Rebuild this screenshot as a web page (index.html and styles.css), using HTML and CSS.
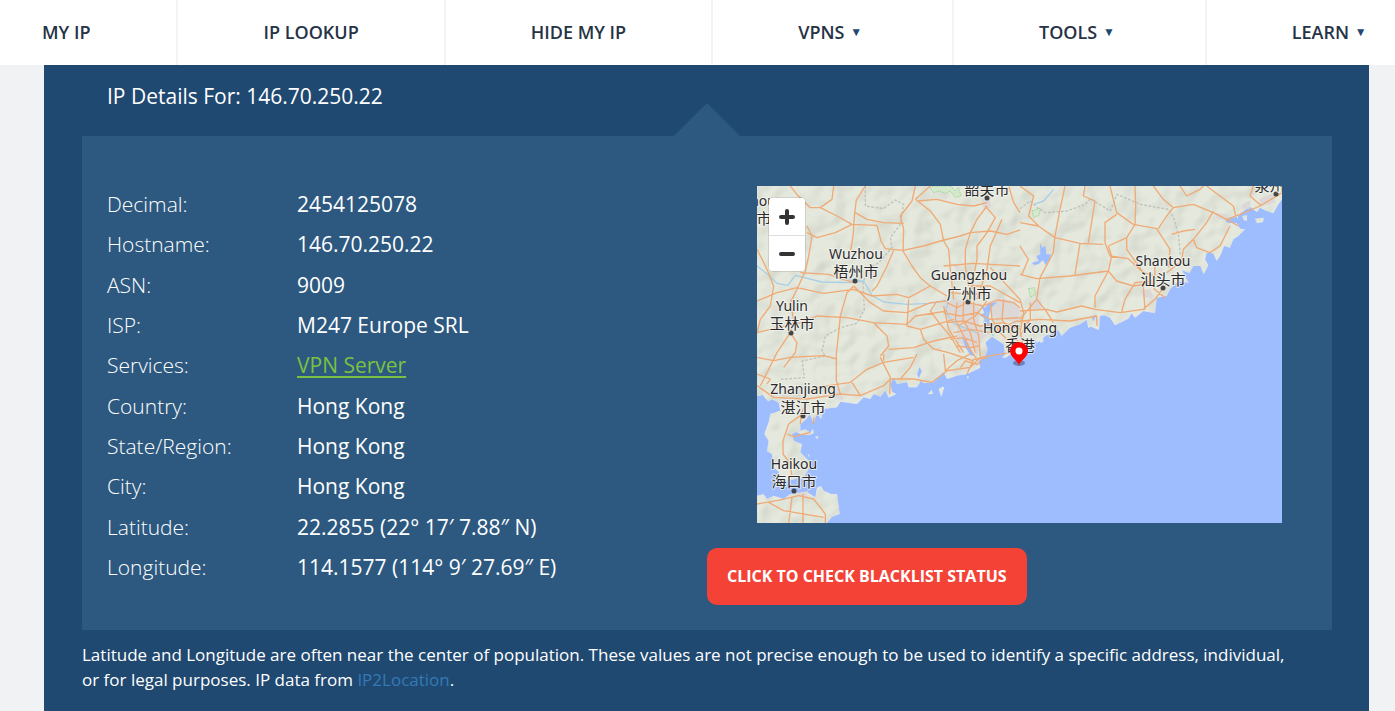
FILE: index.html
```html
<!DOCTYPE html>
<html lang="en">
<head>
<meta charset="utf-8">
<title>IP Details</title>
<link rel="stylesheet" href="styles.css">
</head>
<body>
<nav class="nav" aria-label="Main">
  <a class="nav-item" href="#">MY IP</a>
  <a class="nav-item" href="#">IP LOOKUP</a>
  <a class="nav-item" href="#">HIDE MY IP</a>
  <a class="nav-item" href="#">VPNS <span class="caret">▼</span></a>
  <a class="nav-item" href="#">TOOLS <span class="caret">▼</span></a>
  <a class="nav-item" href="#">LEARN <span class="caret">▼</span></a>
</nav>
<main class="details">
  <h1 class="title">IP Details For: 146.70.250.22</h1>
  <section class="panel">
    <dl class="facts">
      <dt>Decimal:</dt><dd>2454125078</dd>
      <dt>Hostname:</dt><dd>146.70.250.22</dd>
      <dt>ASN:</dt><dd>9009</dd>
      <dt>ISP:</dt><dd>M247 Europe SRL</dd>
      <dt>Services:</dt><dd><a class="service" href="#">VPN Server</a></dd>
      <dt>Country:</dt><dd>Hong Kong</dd>
      <dt>State/Region:</dt><dd>Hong Kong</dd>
      <dt>City:</dt><dd>Hong Kong</dd>
      <dt>Latitude:</dt><dd>22.2855 (22° 17′ 7.88″ N)</dd>
      <dt>Longitude:</dt><dd>114.1577 (114° 9′ 27.69″ E)</dd>
    </dl>
    <div class="side">
      <div class="map">
        <svg class="map-canvas" viewBox="0 0 525 337" role="img" aria-label="Map of Hong Kong and the surrounding coast">
          <defs>
            <filter id="relief" x="0" y="0" width="100%" height="100%" color-interpolation-filters="sRGB">
              <feTurbulence type="fractalNoise" baseFrequency="0.016" numOctaves="2" seed="4" result="noise"/>
              <feDiffuseLighting in="noise" surfaceScale="3" diffuseConstant="1.12" lighting-color="#fff" result="light"><feDistantLight azimuth="225" elevation="62"/></feDiffuseLighting>
              <feBlend in="SourceGraphic" in2="light" mode="multiply" result="shaded"/>
              <feComposite in="shaded" in2="SourceGraphic" operator="in"/>
            </filter>
          </defs>
          <rect class="sea" width="525" height="337"/>
          <svg width="525" height="337" viewBox="0 0 1575 1011">
            <g class="land" filter="url(#relief)">
              <path d="M0 0H1575V40L1564 55 1549 82 1529 75 1509 65 1500 78 1479 62 1459 75 1444 88 1439 112 1449 128 1464 130 1444 150 1429 160 1419 185 1401 180 1392 205 1379 225 1369 202 1349 200 1344 220 1354 238 1340 265 1330 240 1309 240 1297 262 1275 252 1294 290 1264 285 1239 310 1229 330 1199 335 1194 382 1159 375 1134 395 1124 382 1114 398 1074 418 1059 395 1042 388 1029 390 1026 432 1002 422 994 425 989 402 969 415 939 425 914 450 904 432 889 440 864 450 854 462 840 470 830 455 818 480 789 488 750 512 744 505 740 475 705 452 685 470 692 490 684 512 665 525 670 545 630 564 600 569 570 579 560 559 530 589 500 592 485 578 495 555 487 543 480 565 490 588 480 604 455 604 450 589 420 594 410 574 400 594 405 618 418 624 395 635 385 614 370 632 350 624 340 639 320 634 300 654 250 647 240 664 200 669 192 700 180 680 170 710 158 685 148 699 130 714 130 732 105 744 110 764 135 774 130 799 155 824 155 849 140 874 90 884 60 874 66 858 50 844 45 804 30 796 35 764 22 744 35 709 40 684 70 674 65 650 45 640 30 649 12 630 0 629ZM0 929 20 925 30 939 50 929 80 939 100 924 150 919 175 934 180 905 192 900 200 914 222 924 240 924 248 984 225 992 210 1011H0Z"/>
              <path d="M118 738 145 730 160 740 168 728 170 742 155 748 130 744ZM174 752 184 750 182 760ZM512 625 524 612 528 624ZM545 610 556 602 562 604 553 632ZM630 570 636 572 632 578ZM152 802 158 810 156 814ZM845 458 862 462 852 472ZM1456 90 1470 88 1470 104 1460 102ZM1494 98 1520 95 1518 108 1500 112ZM735 514 750 502 763 500 745 516Z"/>
            </g>
            <g class="urban">
              <path d="M560 350 590 340 640 345 668 372 666 420 700 440 676 460 660 510 640 480 600 470 600 430 570 400ZM690 350 725 335 770 345 789 370 780 410 740 400 705 390ZM585 235 605 235 605 255ZM673 40 700 35 702 65 680 68ZM815 350 850 335 855 370 825 375ZM1374 80 1410 85 1414 105 1380 98ZM1455 55 1480 42 1478 68 1455 70ZM1505 40 1550 20 1555 50 1518 60ZM1148 312 1180 310 1190 335 1160 336ZM225 620 245 605 260 640 235 640ZM110 922 155 915 145 935ZM535 490 555 478 550 496ZM570 555 600 550 600 560Z"/>
            </g>
            <path class="water" d="M672 358 685 365 692 355 722 347 702 365 694 395 703 425 690 420 680 395 668 388 682 380ZM614 450 630 470 652 510 640 508 625 484ZM849 172 856 185 866 180 868 205 882 205 878 218 866 238 858 222 844 235 830 237 825 230 845 225 838 210 850 205ZM1404 100 1440 92 1444 112 1410 110ZM0 640 15 625 40 655 30 660ZM1003 395 1018 385 1010 405Z"/>
            <g class="river">
              <path d="M0 240 28 262 60 292 92 298 115 268 195 288 280 290 320 285 345 328 380 348 450 355 520 352 575 342M575 342 565 380 595 415 660 440M830 55 860 45 890 10M692 378 680 410 710 450M310 283 250 280"/>
            </g>
            <g class="border-line">
              <path d="M325 0V60L380 68 415 42 440 55 430 115 400 155 405 185 365 230 335 245 318 290 322 370 300 412 250 425 205 450 195 495 205 510 136 525 142 575 70 580M789 68 820 45 840 65 865 80 930 75 985 55 1000 38 1060 75 1080 25 1150 55 1235 70 1250 95 1265 150 1270 210"/>
            </g>
            <path class="park" d="M518 5 530 0 580 0 595 15 605 5 612 30 595 35 580 15 565 22 545 15 530 20ZM825 75 850 66 846 88 830 95ZM815 308 832 305 836 325 820 333Z"/>
            <g class="roads">
              <path d="M100 0 122 28 160 65 190 65 240 90 285 115 360 118M230 0 225 40 190 65M325 0 298 42 293 80 288 150 280 200M295 80 330 100 380 110 440 112M475 0 465 45 430 90 440 130 438 195 465 240 490 275 520 300 570 330M360 118 372 165 385 188 438 193 500 180 550 165 610 150 640 140M410 193 390 240 360 300 345 315M475 40 520 75 550 115 560 165 575 190 580 250 590 340M520 0 475 40M480 45 540 40 600 55 650 60 690 50M685 60 715 95 690 140 660 180 660 220 650 270 640 345M690 60 660 100 640 140 700 135 750 145 789 132M640 140 625 190 625 240 635 300M755 0 770 50 789 80M735 100 700 180 690 250 660 340M150 140 180 155 235 140 285 115M0 190 30 250 50 300 40 360 10 400 0 440M130 260 215 265 290 290M0 345 60 320 120 305 200 322 290 310 345 330 420 325 455 335 520 300M150 120 165 150 155 210 145 255 120 310 100 350 110 400 100 440 60 500 10 600M290 300 270 320 250 390 245 440 238 504 238 584 250 624M290 300 340 350 380 375 450 380 520 350 570 345M455 340 450 420 490 430 540 415 590 400M0 440 40 430 130 410 180 390 270 395 350 410 450 415 475 390 570 375M350 410 390 450 395 480 370 510M490 430 500 460 530 490M395 490 470 485 530 465 600 450M100 440 120 470 115 500 80 544M540 345 520 375 550 415 580 450 610 500M560 240 650 232 700 235 789 240M700 245 789 340M640 300 700 300 789 350"/>
              <path d="M924 0 909 70 894 150 889 200 849 275M984 0 979 30 1014 45 994 170M1059 0 1079 80 1129 115 1199 128 1239 190 1235 245M789 110 844 120 894 155 969 172 1039 175M1079 85 1044 110 1044 170 1059 210 1114 218 1159 260M1134 0 1136 60 1134 115 1109 155 1054 180M1109 155 1109 190 1159 260 1194 270M969 172 954 265M789 265 839 278 939 270 1054 255 1079 285 1129 300 1189 290M1054 180 1064 210 1054 255 1014 330 1014 365M789 375 869 370 899 378 974 360 1014 370 1089 380 1159 370 1194 340 1215 310M1094 378 1104 340 1134 290 1185 285M1159 300 1164 372M1189 0 1219 40 1249 65 1229 90 1204 128M1249 65 1309 55 1369 80 1409 100 1444 120M1369 75 1349 110 1309 160 1279 190 1274 225 1229 260M1269 0 1289 30 1329 10 1340 0M1244 145 1279 135 1314 130M1309 160 1319 185 1359 200 1389 180 1419 120M1409 100 1449 85 1509 60 1575 20M1349 0 1389 30 1429 60 1436 90M1489 0 1479 30 1514 60M789 180 814 220 795 265M849 275 839 340 864 370 889 410M839 340 789 400M789 405 849 400 939 405 1019 390 1020 420M789 0 830 30 815 90 845 120M1194 240 1192 310 1225 335"/>
              <path d="M0 514 50 524 100 514 200 509 240 519M0 564 40 579 30 594M0 599 50 634 150 639 250 624 310 629 380 599 400 579 470 579 525 589 570 554 640 544 670 514 760 500M180 604 280 589 330 550 380 529 470 514M370 514 400 574 398 624M380 524 380 504M480 504 460 544 430 579M560 504 565 554 600 524 640 504M285 589 310 629M150 644 130 689 95 714 78 764 78 804 100 834 105 874M90 744 110 752 160 739M170 694 170 714M0 954 60 944 125 929 170 939 205 984 205 1011M35 949 80 974 200 994M138 924V1011M105 934 95 1011M130 714 132 690"/>
              <path d="M570 350 600 365 630 350 680 360 720 342 770 350 789 365M560 380 610 390 660 380 700 400 789 395M570 410 620 405 670 420 740 410 789 430M590 440 640 430 700 440 789 420M600 350 595 400 620 450 640 490 660 520M620 340 618 400 640 440 655 500M650 345 650 400 665 450 670 510M700 350 705 400 730 440 770 480M740 340 735 400 765 450 789 470M580 460 620 455 660 470M600 480 640 485 665 480M530 489 575 500 650 525M630 564 650 520 690 516M789 340 800 380 789 440 800 480M820 350 820 400 789 450M560 360 575 430 620 500M610 545 625 525 660 535 675 525M603 420 655 390 690 345M720 430 780 405 820 410M580 320 635 325 690 322"/>
            </g>
          </svg>
          <g class="city-dots">
            <circle cx="98" cy="95" r="2.5"/><circle cx="34" cy="147" r="2.5"/><circle cx="211" cy="116" r="2.5"/><circle cx="230" cy="12" r="2.5"/><circle cx="406" cy="102" r="2.5"/><circle cx="519" cy="8" r="2.5"/><circle cx="46" cy="230" r="2.5"/><circle cx="37" cy="305" r="2.5"/>
          </g>
          <g class="labels">
            <text x="99" y="73">Wuzhou</text><text class="han" x="99" y="91">梧州市</text>
            <text x="212" y="94">Guangzhou</text><text class="han" x="212" y="113">广州市</text>
            <text x="35" y="125">Yulin</text><text class="han" x="35" y="143">玉林市</text>
            <text x="263" y="147">Hong Kong</text><text class="han" x="263" y="165">香港</text>
            <text x="406" y="80">Shantou</text><text class="han" x="406" y="99">汕头市</text>
            <text x="46" y="208">Zhanjiang</text><text class="han" x="46" y="227">湛江市</text>
            <text x="37" y="283">Haikou</text><text class="han" x="37" y="301">海口市</text>
            <text class="han" x="230" y="9">韶关市</text><text class="han" x="520" y="5">泉州市</text>
            <text x="-7" y="20">Liuzhou</text><text class="han" x="-8" y="38">柳州市</text>
          </g>
          <ellipse class="pin-shadow" cx="262" cy="177" rx="6" ry="3"/>
          <path class="pin" d="M262 179C260 174 253 171 253 165A9 9 0 0 1 271 165C271 171 264 174 262 179Z"/>
          <circle class="pin-hole" cx="262" cy="165" r="3.5"/>
        </svg>
        <div class="zoom">
          <button type="button" aria-label="Zoom in"><svg viewBox="0 0 36 36"><path d="M18 12V24M12 18H24"/></svg></button>
          <button type="button" aria-label="Zoom out"><svg viewBox="0 0 36 36"><path d="M12 18H24"/></svg></button>
        </div>
      </div>
      <button class="check" type="button">CLICK TO CHECK BLACKLIST STATUS</button>
    </div>
  </section>
  <p class="note">Latitude and Longitude are often near the center of population. These values are not precise enough to be used to identify a specific address, individual, or for legal purposes. IP data from <a href="#">IP2Location</a>.</p>
</main>
</body>
</html>
```
FILE: styles.css
```css
* { box-sizing: border-box; }
body { margin: 0; background: #f1f2f4; font-family: "Open Sans", sans-serif; overflow-x: hidden; }
.nav { display: flex; background: #fff; }
.nav-item { padding: 0 85px; border-left: 2px solid #f3f3f3; color: #263345; font-size: 18px; font-weight: 600; line-height: 65px; text-decoration: none; white-space: nowrap; }
.nav-item:first-child { padding: 0 86px 0 42px; border: 0; }
.caret { display: inline-block; margin: 0 5px 0 1px; line-height: 20px; vertical-align: 3px; font-size: 12px; color: #1f4971; }
.details { margin: 0 26px 0 44px; padding: 11px 37px 20px 38px; background: #1f4971; color: #fff; }
.title { margin: 0 0 20px 25px; font-size: 21px; line-height: 40px; font-weight: 400; }
.panel { position: relative; display: grid; grid-template-columns: 1fr 1fr; background: #2d5980; padding: 48px 0 25px; }
.panel::before { content: ""; position: absolute; left: 50%; bottom: 100%; margin-left: -33px; border: 33px solid transparent; border-top: 0; border-bottom-color: #2d5980; }
.facts { display: grid; grid-template-columns: 190px 1fr; margin: 0 0 18px 25px; font-size: 21px; line-height: 40px; align-content: space-between; }
.facts dt { font-weight: 300; }
.facts dd { margin: 0; font-weight: 500; }
.service { color: #7ac143; font-weight: 400; text-underline-offset: 3px; }
.side { margin-top: 2px; }
.map { position: relative; margin: 0 50px 25px; }
.map-canvas { display: block; width: 100%; overflow: hidden; }
.sea, .water { fill: #9ebdff; }
.land { fill: #e5e9dd; }
.urban { fill: #dcd8d8; }
.river, .border-line, .roads { fill: none; stroke-linejoin: round; }
.river { stroke: #a9cfe6; stroke-width: 4px; }
.border-line { stroke: #bfc1bd; stroke-width: 4px; stroke-dasharray: 8 5; }
.roads { stroke: #efaa76; stroke-width: 4px; }
.park { fill: #d5e8cc; stroke: #9bd598; stroke-width: 3px; stroke-dasharray: 4 3; }
.city-dots { fill: #444; }
.labels { font-family: "Noto Sans", sans-serif; font-size: 14px; text-anchor: middle; fill: #2b2b2b; stroke: #f4f4f1; stroke-width: 2px; stroke-opacity: 0.8; paint-order: stroke; stroke-linejoin: round; }
.han { font-family: "Noto Sans CJK SC", sans-serif; font-size: 15px; }
.pin { fill: #f00; }
.pin-hole { fill: #fff; }
.pin-shadow { fill: #526b98; opacity: 0.7; }
.zoom { position: absolute; top: 12px; left: 12px; width: 36px; border-radius: 4px; background: #fff; box-shadow: 0 0 0 1px rgba(0, 0, 0, 0.1); overflow: hidden; }
.zoom button { display: block; width: 36px; height: 37px; padding: 0; border: 0; background: #fff; }
.zoom button + button { height: 36px; border-top: 1px solid #ddd; }
.zoom svg { display: block; fill: none; stroke: #333; stroke-width: 4px; stroke-linecap: round; }
.check { display: block; background: #f44336; color: #fff; border: 0; border-radius: 10px; padding: 0 20px; font: 700 16px/57px "Open Sans", sans-serif; }
.note { margin: 12px 40px 0 0; font-size: 17px; line-height: 25px; }
.note a { color: #337ab7; text-decoration: none; }
```
